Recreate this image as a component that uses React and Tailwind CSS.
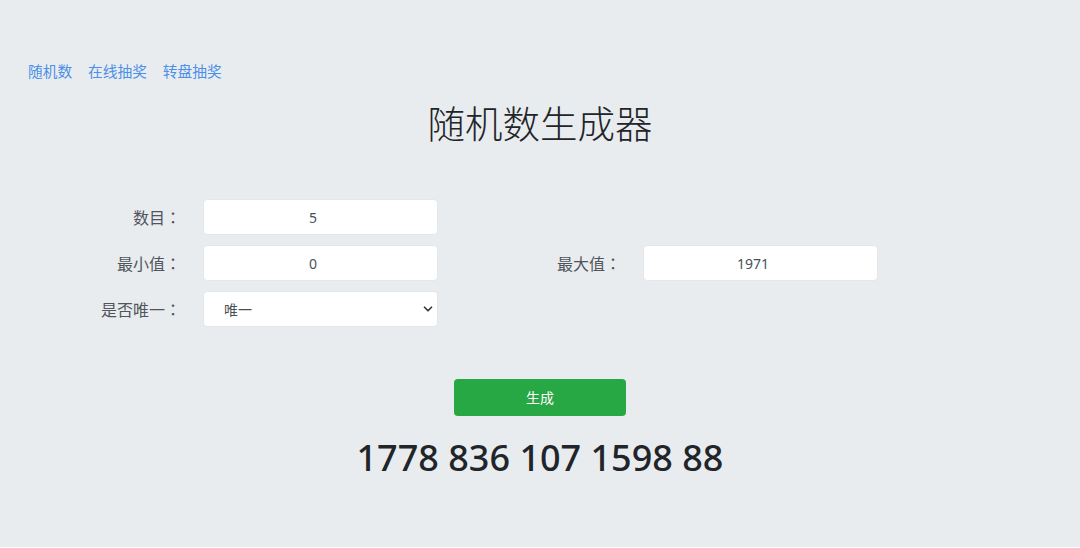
import React, { useState } from 'react';
import { ChevronDown } from 'lucide-react';

const font = { fontFamily: '"Noto Sans", "Noto Sans CJK SC", sans-serif' };

// labels end with a centred full-width colon, like the original's font
const Field = ({ label, children }) => (
  <>
    <label className="pr-[7px] text-right text-[16px] text-[#4f555b]">
      {label}
      <span className="font-['Noto_Sans_CJK_TC',sans-serif]">：</span>
    </label>
    <div className="px-[15px]">{children}</div>
  </>
);

const NumberInput = ({ value }) => (
  <input
    type="text"
    defaultValue={value}
    className="h-[36px] w-full rounded-[4px] border border-[#e3e6ea] bg-white pr-[15px] text-center text-[14px] text-[#495057] outline-none"
  />
);

export default function App() {
  const [result] = useState('1778 836 107 1598 88');

  return (
    <div className="min-h-[547px] w-full bg-[#e9ecef]" style={font}>
      <nav className="flex gap-[16px] pl-[28px] pt-[60px] text-[14.7px] leading-[22px] text-[#4a8fe8]">
        <a href="#">随机数</a>
        <a href="#">在线抽奖</a>
        <a href="#">转盘抽奖</a>
      </nav>

      <h1 className="mt-[16px] text-center text-[37.5px] font-light leading-[52px] text-[#212529]">随机数生成器</h1>

      {/* form grid */}
      <div className="mt-[49px] grid grid-cols-[175px_265px_175px_265px] items-center gap-y-[10px] pl-[13px]">
        <Field label="数目">
          <NumberInput value="5" />
        </Field>
        <div />
        <div />

        <Field label="最小值">
          <NumberInput value="0" />
        </Field>
        <Field label="最大值">
          <NumberInput value="1971" />
        </Field>

        <Field label="是否唯一">
          <div className="relative">
            <select className="h-[36px] w-full appearance-none rounded-[4px] border border-[#e3e6ea] bg-white pl-[20px] text-[14px] text-[#495057] outline-none">
              <option>唯一</option>
              <option>不唯一</option>
            </select>
            <ChevronDown className="pointer-events-none absolute right-[3px] top-[11px] h-[14px] w-[14px] text-[#343a40]" strokeWidth={3} />
          </div>
        </Field>
        <div />
        <div />
      </div>

      <div className="mt-[52px] flex flex-col items-center">
        <button className="h-[37px] w-[172px] rounded-[4px] bg-[#28a745] text-[14px] text-white">生成</button>
        <div className="mt-[18px] text-[36px] font-medium leading-[48px] text-[#212529]">{result}</div>
      </div>
    </div>
  );
}
